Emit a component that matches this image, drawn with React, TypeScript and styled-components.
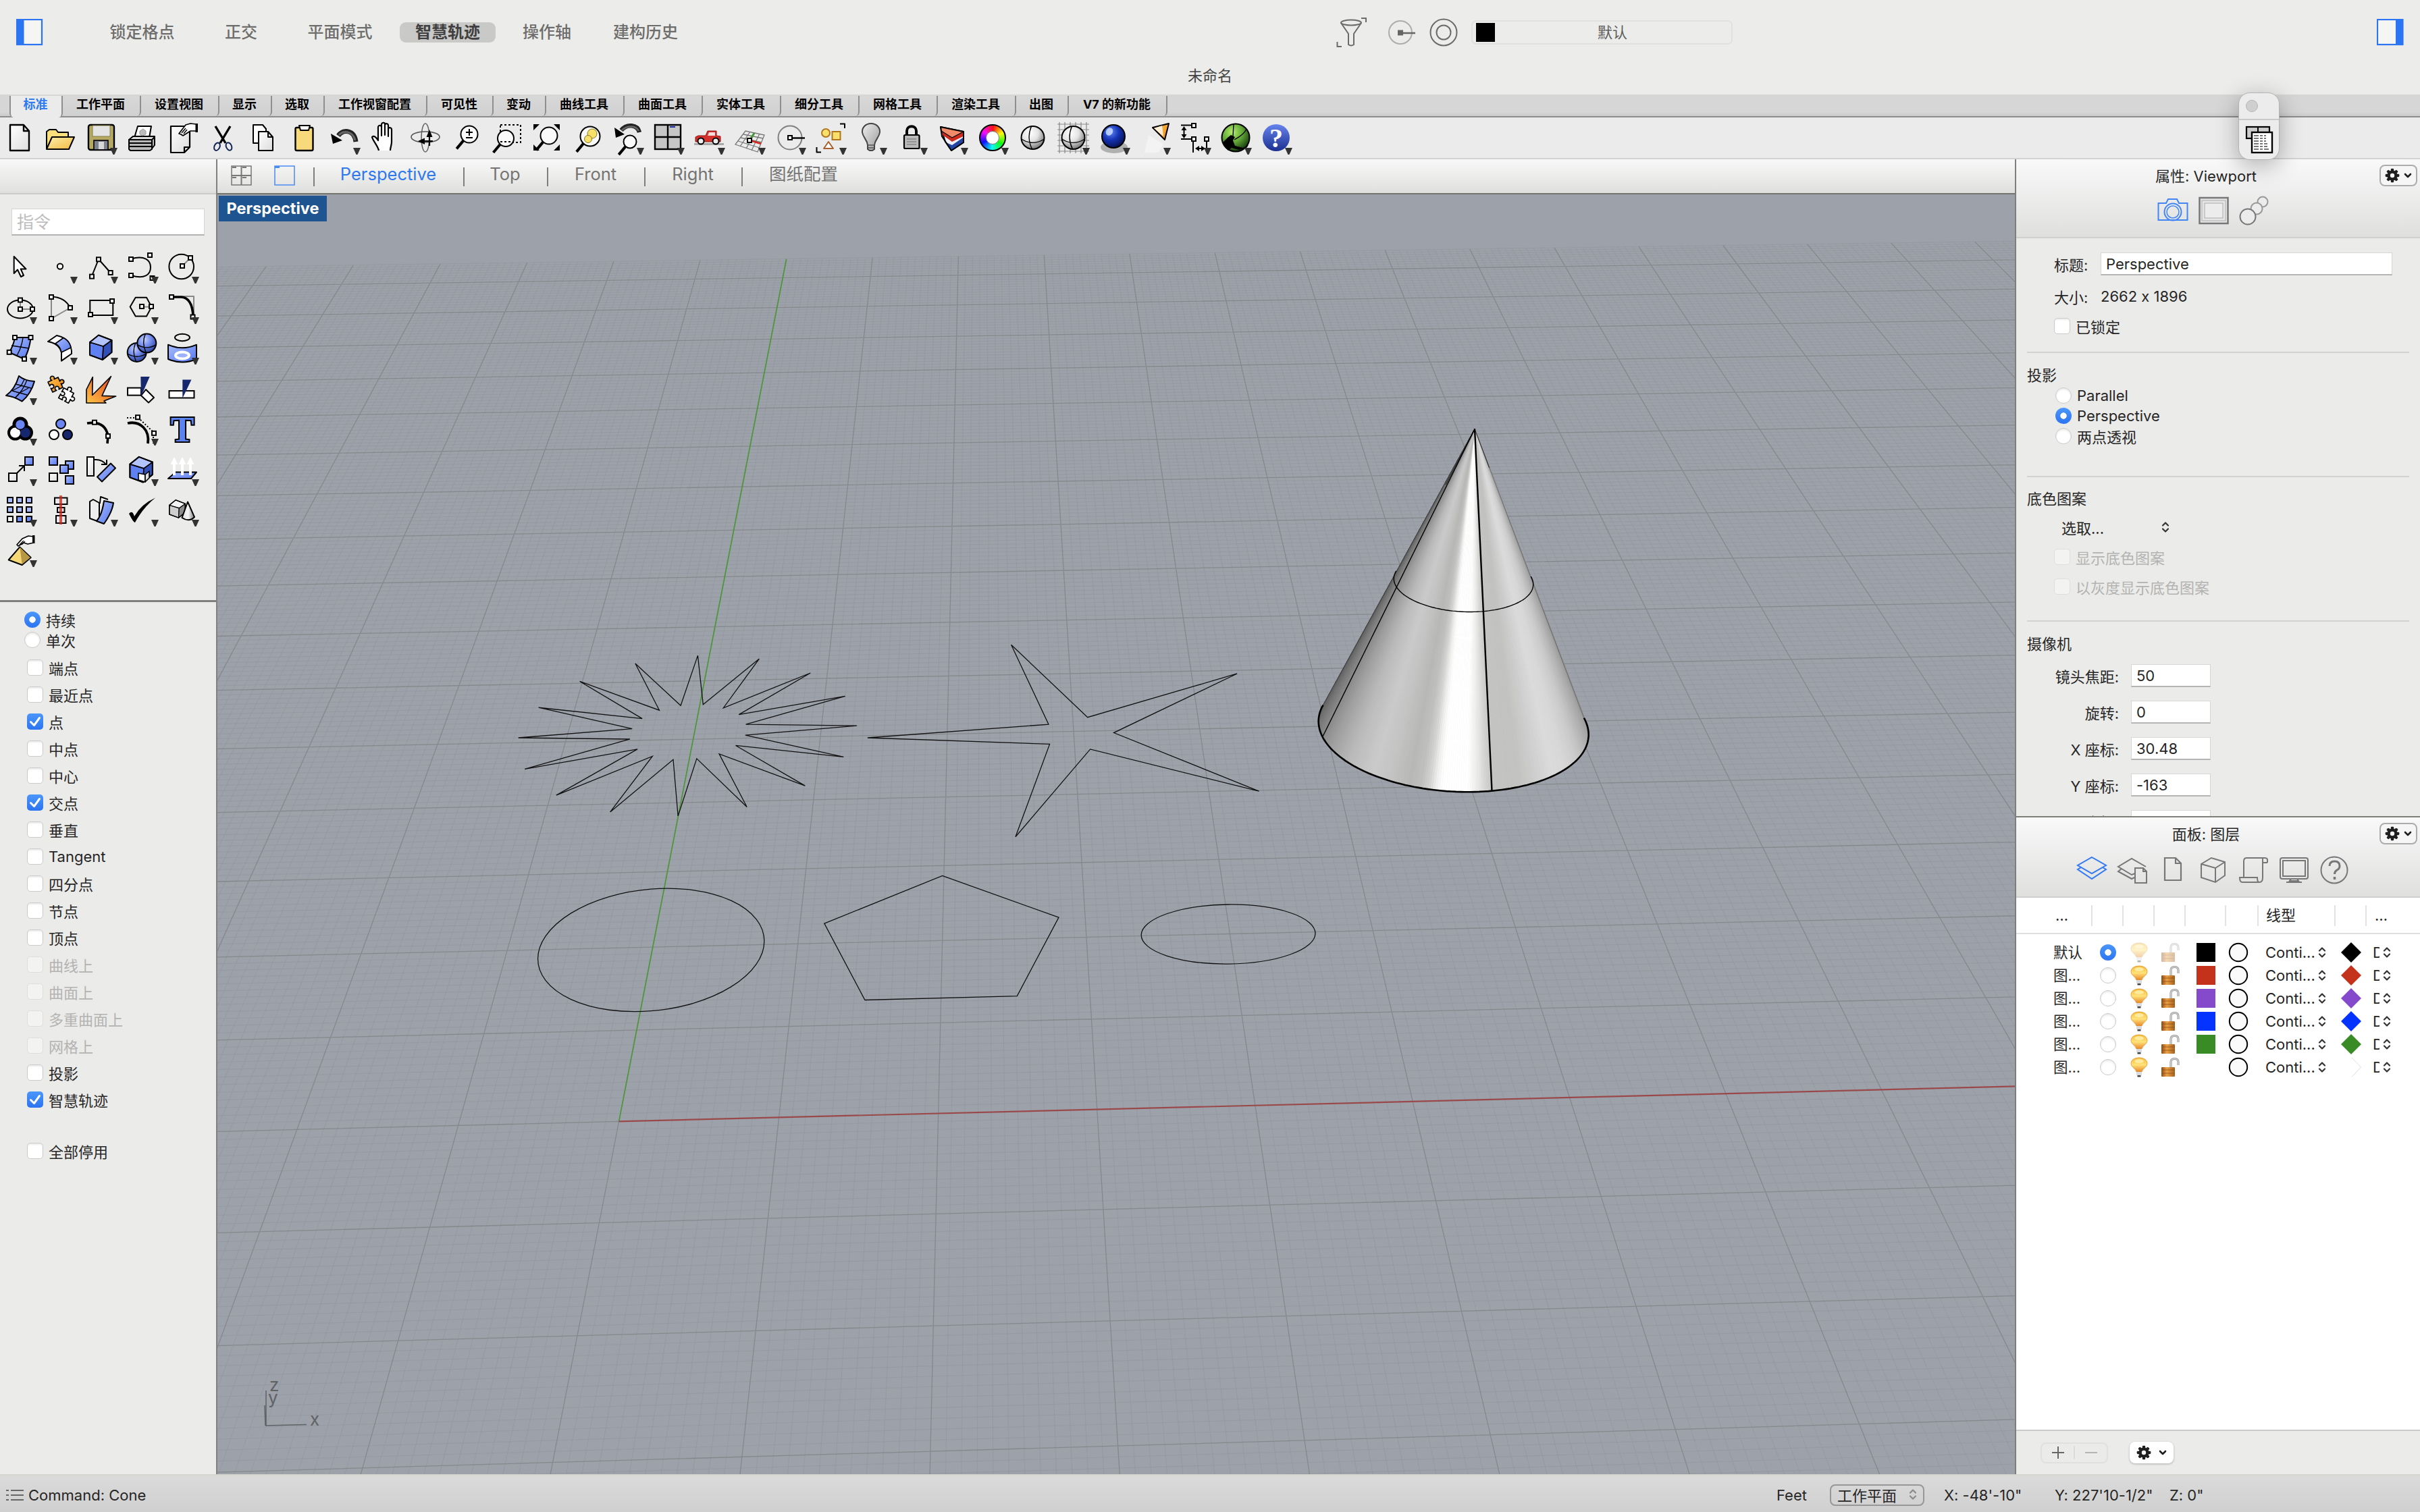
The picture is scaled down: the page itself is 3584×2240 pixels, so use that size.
import React from 'react';
import styled, { createGlobalStyle, css } from 'styled-components';

const Global = createGlobalStyle`
  html, body { margin: 0; padding: 0; }
  * { box-sizing: border-box; }
  body { background: #ebebe9; font-family: Inter, "Noto Sans CJK SC", sans-serif; font-size: 22px; color: #262626; font-feature-settings: "calt" 0; }
  svg { display: block; flex: none; }
`;

const BLUE = '#2b74f3';

/* ---------- frame ---------- */

const Window = styled.div`
  position: relative;
  width: 3584px;
  height: 2240px;
  display: flex;
  flex-direction: column;
  overflow: hidden;
  white-space: nowrap;
  background: #ebebe9;
`;

const Header = styled.header`
  height: 142px;
  flex: none;
  display: flex;
  flex-direction: column;
  background: #ececea;
  border-bottom: 2px solid #d6d6d5;
`;

const HeaderRow = styled.div`
  height: 96px;
  display: flex;
  align-items: center;
  padding: 0 24px;
`;

const Modes = styled.div`
  display: flex;
  align-items: center;
  margin-left: 78px;
`;

const Mode = styled.div<{ $w: number; $on?: boolean }>`
  width: ${p => p.$w}px;
  height: 30px;
  line-height: 29px;
  text-align: center;
  font-size: 24px;
  font-weight: ${p => (p.$on ? 700 : 500)};
  color: ${p => (p.$on ? '#404040' : '#6d6d6c')};
  border-radius: 9px;
  background: ${p => (p.$on ? '#c9c9c8' : 'transparent')};
`;

const Spacer = styled.div<{ $w?: number; $h?: number }>`
  ${p => (p.$w ? css`width: ${p.$w}px; flex: none;` : p.$h ? css`height: ${p.$h}px; flex: none;` : css`flex: 1;`)}
`;

const LayerField = styled.div`
  width: 387px;
  height: 36px;
  margin-left: 20px;
  border: 2px solid #e1e1e0;
  border-radius: 7px;
  display: flex;
  align-items: center;
  padding-left: 5px;
  color: #5e5e5e;
  font-size: 22px;
`;

const LayerSwatch = styled.i`
  width: 28px;
  height: 28px;
  background: #000;
`;

const LayerName = styled.span`
  width: 348px;
  padding-bottom: 4px;
  text-align: center;
`;

const DocTitle = styled.div`
  text-align: center;
  line-height: 32px;
  font-size: 22px;
  color: #434343;
`;

const TabStrip = styled.nav`
  height: 32px;
  flex: none;
  display: flex;
  padding-left: 14px;
  background: linear-gradient(#d6d6d6 0 24px, #cbcbcb);
  border-bottom: 2px solid #8d8d8d;
`;

const TabItem = styled.div<{ $w: number; $on?: boolean }>`
  width: ${p => p.$w}px;
  height: ${p => (p.$on ? 32 : 30)}px;
  line-height: 26px;
  text-align: center;
  font-size: 18px;
  font-weight: 700;
  color: ${p => (p.$on ? '#2f7bf0' : '#000')};
  background: ${p => (p.$on ? '#ebebeb' : 'linear-gradient(#d8d8d8, #d0d0d0)')};
  border-right: 2px solid #8f8f8f;
  border-left: ${p => (p.$on ? '2px solid #8f8f8f' : '0')};
  border-radius: 0 0 6px 6px;
  padding-right: 2px;
`;

const ToolBar = styled.div`
  height: 62px;
  flex: none;
  display: flex;
  background: #ebebeb;
  border-bottom: 2px solid #d2d2d2;
`;

const ToolRun = styled.div`
  display: flex;
  margin-left: -1px;
`;

const Main = styled.div`
  height: 1948px;
  flex: none;
  display: flex;
`;

const StatusBar = styled.footer`
  height: 56px;
  flex: none;
  display: flex;
  align-items: center;
  padding: 3px 0 0 9px;
  border-top: 2px solid #d4d4d0;
  background: linear-gradient(#dadada, #d0d0d0);
`;

const StatusText = styled.span<{ $w?: number }>`
  width: ${p => (p.$w ? p.$w + 'px' : 'auto')};
  font-size: 22px;
  flex: none;
`;

const PlaneSelect = styled.div`
  width: 140px;
  height: 32px;
  border: 2px solid #979797;
  border-radius: 8px;
  display: flex;
  align-items: center;
  justify-content: space-between;
  padding: 0 9px 2px 9px;
`;

/* ---------- left column ---------- */

const Left = styled.aside`
  width: 322px;
  flex: none;
  border-right: 2px solid #808080;
  display: flex;
  flex-direction: column;
  background: #ebebe9;
`;

const LeftCap = styled.div`
  height: 52px;
  background: linear-gradient(#f8f8f8, #e0e0df);
  border-bottom: 2px solid #cacac9;
`;

const CommandInput = styled.div`
  margin: 21px 17px 16px 17px;
  height: 40px;
  line-height: 38px;
  padding-left: 7px;
  background: #fff;
  border: 1px solid #d5d5d4;
  border-bottom: 2px solid #b2b2b2;
  font-size: 25px;
  color: #bdbdbd;
`;

const Palette = styled.div`
  display: grid;
  grid-template-columns: repeat(5, 60px);
  grid-auto-rows: 60px;
  height: 527px;
  border-bottom: 3px solid #7f7f7f;
  align-content: start;
`;

const Snaps = styled.div`
  display: flex;
  flex-direction: column;
  padding-top: 11px;
`;

const Option = styled.label<{ $h: number; $pl: number; $dim?: boolean; $gap?: number }>`
  height: ${p => p.$h}px;
  flex: none;
  padding-left: ${p => p.$pl}px;
  display: flex;
  align-items: center;
  gap: ${p => p.$gap ?? 8}px;
  font-size: 22px;
  color: ${p => (p.$dim ? '#b3b3b2' : '#262626')};
`;

const CheckBox = styled.i<{ $on?: boolean; $dim?: boolean }>`
  width: 24px;
  height: 24px;
  flex: none;
  border-radius: 5px;
  background: ${p => (p.$on ? 'linear-gradient(#4b96fb, #2c74f2)' : p.$dim ? '#f3f3f2' : '#fff')};
  border: ${p => (p.$on ? '0' : p.$dim ? '1px solid #dededd' : '1px solid #cbcbca')};
  box-shadow: ${p => (p.$on || p.$dim ? 'none' : 'inset 0 2px 2px #ececec')};
`;

const RadioDot = styled.i<{ $on?: boolean }>`
  width: 24px;
  height: 24px;
  flex: none;
  border-radius: 50%;
  background: ${p => (p.$on ? 'radial-gradient(circle, #fff 0 4.4px, transparent 5px), linear-gradient(#4b96fb, #2c74f2)' : '#fff')};
  border: ${p => (p.$on ? '0' : '1px solid #c9c9c9')};
  box-shadow: ${p => (p.$on ? 'none' : 'inset 0 2px 3px #e9e9e9')};
`;

/* ---------- centre ---------- */

const Center = styled.main`
  width: 2662px;
  flex: none;
  display: flex;
  flex-direction: column;
`;

const ViewTabs = styled.div`
  height: 52px;
  flex: none;
  display: flex;
  align-items: center;
  padding: 0 0 2px 20px;
  background: linear-gradient(#f9f9f9, #dfdfdd);
  border-bottom: 2px solid #757570;
`;

const ViewTab = styled.div<{ $w: number; $on?: boolean }>`
  width: ${p => p.$w}px;
  line-height: 28px;
  padding: 0 2px 4px 0;
  text-align: center;
  font-size: 25.5px;
  color: ${p => (p.$on ? '#2f78ee' : '#747474')};
`;

const Bar = styled.i`
  width: 2px;
  height: 28px;
  margin-top: 4px;
  background: #7f7f7f;
`;

const Canvas = styled.div`
  position: relative;
  height: 1896px;
  background: #9da1a9;
`;

const ViewLabel = styled.div`
  position: absolute;
  left: 2px;
  top: 2px;
  width: 160px;
  height: 38px;
  line-height: 38px;
  text-align: center;
  background: #1e548f;
  color: #fff;
  font-size: 23.5px;
  font-weight: 700;
`;

/* ---------- right column ---------- */

const Right = styled.aside`
  width: 600px;
  flex: none;
  border-left: 2px solid #7e7e7b;
  display: flex;
  flex-direction: column;
  background: #ebebe9;
`;

const PanelHead = styled.div<{ $h: number }>`
  height: ${p => p.$h}px;
  flex: none;
  background: linear-gradient(#f9f9f9, #dfdfde);
  border-bottom: 2px solid #cfcfce;
  display: flex;
  flex-direction: column;
`;

const HeadTitle = styled.div`
  height: 48px;
  display: grid;
  grid-template-columns: 24px 1fr 56px;
  align-items: center;
  padding-right: 4px;
  text-align: center;
`;

const HeadText = styled.span`
  padding-bottom: 2px;
`;

const GearButton = styled.div<{ $solid?: boolean }>`
  width: ${p => (p.$solid ? 65 : 56)}px;
  height: 32px;
  border-radius: 8px;
  border: ${p => (p.$solid ? '0' : '2px solid #acacab')};
  background: ${p => (p.$solid ? '#fff' : '#f6f6f6')};
  box-shadow: ${p => (p.$solid ? '0 1px 3px #aaa' : 'none')};
  display: flex;
  align-items: center;
  justify-content: center;
  gap: ${p => (p.$solid ? 11 : 6)}px;
`;

const IconRow = styled.div<{ $pl: number; $gap: number }>`
  display: flex;
  align-items: center;
  gap: ${p => p.$gap}px;
  padding-left: ${p => p.$pl}px;
`;

const PropBody = styled.div`
  height: 858px;
  flex: none;
  overflow: hidden;
  border-bottom: 2px solid #7e7e7b;
  display: flex;
  flex-direction: column;
`;

const PropRow = styled.div<{ $h: number; $pl?: number }>`
  height: ${p => p.$h}px;
  flex: none;
  display: flex;
  align-items: center;
  padding-left: ${p => p.$pl ?? 56}px;
`;

const RowLabel = styled.span<{ $w: number; $right?: boolean }>`
  width: ${p => p.$w}px;
  text-align: ${p => (p.$right ? 'right' : 'left')};
`;

const Field = styled.div<{ $w: number }>`
  width: ${p => p.$w}px;
  height: 34px;
  line-height: 32px;
  padding-left: 7px;
  background: #fff;
  border: 1px solid #d6d6d5;
  border-bottom: 2px solid #b5b5b5;
`;

const Rule = styled.hr`
  width: 566px;
  height: 2px;
  flex: none;
  margin: 0 16px;
  border: 0;
  background: #d2d2d1;
`;

const LayerTable = styled.div`
  height: 790px;
  flex: none;
  background: #fff;
  border-bottom: 2px solid #cbcbca;
`;

const COLS = '113px 46px 46px 46px 60px 48px 114px 46px 79px';

const TableHead = styled.div`
  height: 54px;
  display: grid;
  grid-template-columns: ${COLS};
  align-items: center;
  border-bottom: 2px solid #e0e0e0;
  margin-bottom: 10px;
`;

const HeadCell = styled.div<{ $pl?: number; $last?: boolean }>`
  height: 31px;
  line-height: 31px;
  padding-left: ${p => p.$pl ?? 0}px;
  border-right: ${p => (p.$last ? '0' : '2px solid #e3e3e3')};
`;

const LayerRow = styled.div`
  height: 34px;
  display: grid;
  grid-template-columns: ${COLS};
  align-items: center;
`;

const NameCell = styled.div`
  padding: 0 0 3px 55px;
  font-size: 21.5px;
`;

const MidCell = styled.div<{ $pr?: number }>`
  display: flex;
  align-items: center;
  justify-content: center;
  padding-right: ${p => p.$pr ?? 0}px;
`;

const LineCell = styled.div`
  display: flex;
  align-items: center;
  justify-content: space-between;
  padding: 0 14px 0 10px;
`;

const PrintCell = styled.div`
  display: flex;
  align-items: center;
  gap: 5px;
  padding-left: 9px;
`;

const Clip = styled.span`
  width: 10px;
  overflow: hidden;
`;

const Swatch = styled.i<{ $c: string }>`
  width: 28px;
  height: 28px;
  background: ${p => p.$c};
`;

const TableFoot = styled.div`
  flex: 1;
  display: flex;
  align-items: center;
  padding: 0 0 0 36px;
  gap: 32px;
`;

const Segment = styled.div`
  width: 100px;
  height: 31px;
  border: 2px solid #e0e0df;
  border-radius: 8px;
  display: flex;
  align-items: center;
  justify-content: space-evenly;
`;

const SegmentBar = styled.i`
  width: 2px;
  height: 20px;
  background: #dcdcdb;
`;

/* ---------- floating palette ---------- */

const Floating = styled.div`
  position: absolute;
  left: 3315px;
  top: 137px;
  width: 61px;
  height: 100px;
  border-radius: 17px;
  border: 1px solid #b3b3b3;
  background: #ececec;
  box-shadow: 0 8px 34px rgba(0, 0, 0, 0.3);
  display: flex;
  flex-direction: column;
`;

const FloatHead = styled.div`
  height: 40px;
  border-bottom: 2px solid #c9c9c9;
  padding: 10px 0 0 10px;
`;

const FloatDot = styled.i`
  display: block;
  width: 18px;
  height: 18px;
  border-radius: 50%;
  background: #cfcfcf;
  border: 1px solid #b6b6b6;
`;

const FloatBody = styled.div`
  padding: 8px 0 0 9px;
`;

/* ---------- small glyphs ---------- */

const Tick = () => (
  <svg width="24" height="24" viewBox="0 0 24 24">
    <path d="M5.5 12.5 10.5 17.5 18.5 6.5" fill="none" stroke="#fff" strokeWidth="3" strokeLinecap="round" strokeLinejoin="round" />
  </svg>
);

const Updown = ({ c = '#333' }: { c?: string }) => (
  <svg width="12" height="18" viewBox="0 0 12 18">
    <path d="M2 6.5 6 2.5 10 6.5M2 11.5 6 15.5 10 11.5" fill="none" stroke={c} strokeWidth="2.2" strokeLinecap="round" strokeLinejoin="round" />
  </svg>
);

const Gear = () => (
  <svg width="22" height="22" viewBox="-11 -11 22 22">
    {[0, 45, 90, 135].map(a => (
      <rect key={a} x="-2.2" y="-10.3" width="4.4" height="20.6" rx="1.4" fill="#1f1f1f" transform={`rotate(${a})`} />
    ))}
    <circle r="5.6" fill="none" stroke="#1f1f1f" strokeWidth="4" />
    <circle r="3.2" fill="#f8f8f8" />
  </svg>
);

const Down = () => (
  <svg width="12" height="10" viewBox="0 0 12 10">
    <path d="M2 3 6 7 10 3" fill="none" stroke="#1f1f1f" strokeWidth="2.6" strokeLinecap="round" strokeLinejoin="round" />
  </svg>
);

const SidebarGlyph = ({ right }: { right?: boolean }) => (
  <svg width="40" height="40" viewBox="0 0 40 40">
    <rect x="1" y="1" width="37" height="37" fill="#f5f5f4" stroke={BLUE} strokeWidth="2.2" />
    <rect x={right ? 28 : 0} y="0" width="11.5" height="39" fill={BLUE} />
  </svg>
);

const Line = ({ d, w = 2, c = '#000', f = 'none', dash }: { d: string; w?: number; c?: string; f?: string; dash?: string }) => (
  <path d={d} fill={f} stroke={c} strokeWidth={w} strokeLinejoin="round" strokeDasharray={dash} />
);

const H = ({ x, y }: { x: number; y: number }) => (
  <rect x={x - 3} y={y - 3} width="6" height="6" fill="#fff" stroke="#000" strokeWidth="2" />
);

const Lens = ({ x, y, r }: { x: number; y: number; r: number }) => (
  <g>
    <path d={`M${x - r * 0.7} ${y + r * 0.75} L${x - r * 0.7 - 10} ${y + r * 0.75 + 12}`} stroke="#000" strokeWidth="4" />
    <circle cx={x} cy={y} r={r} fill="#fafafa" stroke="#000" strokeWidth="2" />
  </g>
);

const Ball = ({ x, y, r, f, w = 2 }: { x: number; y: number; r: number; f: string; w?: number }) => (
  <g>
    <circle cx={x} cy={y} r={r} fill={f} stroke="#000" strokeWidth={w} />
    <path d={`M${x - r} ${y + 2} Q${x} ${y + r * 0.75} ${x + r} ${y + 2} M${x - 2} ${y - r} Q${x - r * 0.55} ${y} ${x - 1} ${y + r}`} fill="none" stroke="#000" strokeWidth={w * 0.7} />
  </g>
);

const Sq = ({ x, y, s = 12, f = 'url(#gBlue)' }: { x: number; y: number; s?: number; f?: string }) => (
  <rect x={x} y={y} width={s} height={s} fill={f} stroke="#000" strokeWidth="2" />
);

const Tool = ({ more, children }: { more?: boolean; children: React.ReactNode }) => (
  <svg width="60" height="60" viewBox="0 0 60 60">
    {children}
    {more && <path d="M44 45h11l-4.5 10h-2z" fill="#333" />}
  </svg>
);

const hue = Array.from({ length: 48 }, (_, i) => i * 7.5);

const Pincer = ({ x = 0, y = 0 }: { x?: number; y?: number }) => (
  <g transform={`translate(${x} ${y})`}>
    <path d="M1 13 9 4 18 0 26 1V10L17 12 11 10 3 15Z" fill="#fff" stroke="#000" strokeWidth="1.7" strokeLinejoin="round" />
    <path d="M5 13 11 7M8 13 13 8" stroke="#000" strokeWidth="1.2" />
    <rect x="24" y="-1" width="3.5" height="12" fill="#000" />
  </g>
);

/* ---------- toolbar icons ---------- */

const toolbarIcons: [React.ReactNode, boolean?][] = [
  [<Line d="M16 11H36L44 20V49H16ZM36 11V20H44" f="url(#gPaper)" w={2.4} />],
  [<g>
    <Line d="M10 46V21L14 18H24L27 22H42V28" f="#fbdf7c" />
    <Line d="M10 47 18 29H51L43 47Z" f="url(#gGold)" />
  </g>],
  [<g>
    <rect x="12" y="11" width="38" height="37" rx="3" fill="#b5a863" stroke="#000" strokeWidth="2.4" />
    <rect x="18" y="12" width="26" height="16" fill="#e4e4e4" stroke="#8b8047" />
    <rect x="20" y="34" width="21" height="14" fill="#7d8290" stroke="#000" strokeWidth="1.6" />
    <rect x="27" y="36" width="8" height="11" fill="#d8d8d8" />
  </g>, true],
  [<g>
    <Line d="M20 30 25 13H45L42 30" f="#fff" />
    <Line d="M12 33 18 28H50L47 33Z" f="#ddd" />
    <Line d="M12 33H46V47L43 49H14L12 47ZM46 33 50 29V41L46 46" f="#b9b9b9" />
    <Line d="M12 38H46M12 43H46" />
    <Line d="M28 20 33 17 37 20V25L32 27 28 25Z" f="#bbb" c="#999" w={1} />
  </g>],
  [<g>
    <Line d="M14 13H42V44L34 52H14ZM34 52V44H42" f="url(#gPaper)" w={2.2} />
    <Line d="M26 24 36 11 43 9 52 10V20L43 20 32 27 29 25Z" f="#fff" w={1.7} />
    <Line d="M30 23 36 16M33 24 38 18" w={1.4} />
    <rect x="50.500" y="9" width="3.500" height="13" />
  </g>],
  [<g>
    <Line d="M20 13 35 38M42 13 27 38" w={3.4} />
    <ellipse cx="22.5" cy="43" rx="4" ry="6" fill="none" stroke="#142457" strokeWidth="2" transform="rotate(25 22 43)" />
    <ellipse cx="40" cy="43" rx="4" ry="6" fill="none" stroke="#142457" strokeWidth="2" transform="rotate(-25 40 43)" />
  </g>],
  [<g>
    <Line d="M16 11H30L35 17V38H16Z" f="#fff" />
    <Line d="M24 21H38L45 29V49H24ZM38 21V29H45" f="url(#gPaper)" />
  </g>],
  [<g>
    <rect x="18.5" y="15" width="26" height="34" rx="2" fill="#f8d97b" stroke="#000" strokeWidth="2.4" />
    <Line d="M24 12H40L38 19H26Z" f="#fff" />
  </g>],
  [<g>
    <Line d="M48 36C46 19 30 16 22 27" w={7} c="#222" />
    <Line d="M47 34C44 21 31 18 23 26" w={3} c="#666" />
    <path d="M11 24 14 39 28 34Z" />
  </g>, true],
  [<Line d="M22 49C21 43 13 34 12 29 14 26 18 29 21 34V14C22 11 25 11 26 14V27 10C27 7 31 7 31 10V26 11C32 8 36 9 36 12V28 17C37 14 41 15 41 18V36C41 42 39 44 39 49" f="#fff" w={2.2} />],
  [<g>
    <ellipse cx="31" cy="30" rx="6" ry="21" fill="none" stroke="#666" strokeWidth="1.6" />
    <ellipse cx="31" cy="29" rx="21" ry="8" fill="none" stroke="#555" strokeWidth="1.6" />
    <path d="M37 18 41.5 29H32.5ZM20 35 30 30.500V40Z" />
    <Line d="M37 28V42M28 35H42" w={2.2} />
  </g>],
  [<g>
    <Lens x={36} y={25} r={12.5} />
    <Line d="M36 17V27M31 22H41M31 30H41" />
  </g>],
  [<g>
    <rect x="22" y="11" width="30" height="26" fill="none" stroke="#000" strokeWidth="2" strokeDasharray="3 3" />
    <Lens x={30} y={31} r={12} />
    <Line d="M22 36H38" dash="3 3" />
  </g>],
  [<g>
    <path d="M11 10H20L11 19ZM50 10H41L50 19ZM11 49H20L11 40ZM50 49H41L50 40Z" />
    <Lens x={34} y={27} r={12.5} />
  </g>],
  [<g>
    <Lens x={35} y={28} r={14.5} />
    <circle cx="38" cy="24" r="7" fill="#f6e06a" stroke="#8a7820" />
    <circle cx="32" cy="32" r="5.5" fill="#f6e06a" stroke="#8a7820" />
  </g>],
  [<g>
    <Line d="M48 22C45 10 29 9 21 19" w={6.5} c="#222" />
    <Line d="M47 20C43 12 30 11 22 19" w={2.6} c="#666" />
    <path d="M11 15 13 30 26 25Z" />
    <Lens x={34} y={36} r={9.5} />
  </g>, true],
  [<g>
    <rect x="11" y="11" width="38" height="36" fill="#c6c6c6" stroke="#000" strokeWidth="2.4" />
    <Line d="M30 11V47M11 29H49" w={2.4} />
    <path d="M33 13h8v2h-8z" fill="#1c2f9c" />
  </g>, true],
  [<g>
    <path d="M9 39.5h44" stroke="#aaa" strokeWidth="3" />
    <path d="M11 36V29L15 27H26L29 20H42V27L48 28V36Z" fill="#d5302b" stroke="#8e1512" />
    <path d="M31 22h9v5H29z" fill="#f7dcdc" />
    <circle cx="19" cy="35" r="4.5" stroke="#000" strokeWidth="2" fill="#eee" />
    <circle cx="41" cy="35" r="4.5" stroke="#000" strokeWidth="2" fill="#eee" />
  </g>, true],
  [<g>
    <path d="M10 40 25 20 53 26 43 51Z M14 35 46 45M18 30 49 37M22 25 51 31M17 43 32 21M26 46 39 23M34 49 46 24" fill="none" stroke="#777" strokeWidth="1.3" />
    <Line d="M31 34 38 23" c="#3ba02e" w={2.6} />
    <Line d="M32 34 48 39" c="#d02a22" w={2.6} />
    <H x={31} y={34} />
  </g>, true],
  [<g>
    <circle cx="31" cy="30" r="17.5" fill="none" stroke="#808080" strokeWidth="2" />
    <Line d="M34 30.500H53" w={2.4} />
    <H x={31} y={30} />
  </g>, true],
  [<g>
    <circle cx="24" cy="23" r="6" fill="#f8e06b" stroke="#b0761d" strokeWidth="2" />
    <rect x="33.5" y="21" width="12" height="12" fill="#f8e06b" stroke="#b0761d" strokeWidth="2" />
    <Line d="M28 36 35 46H21Z" c="#a8602c" f="#fff" />
    <Line d="M45 9.500H52V16M10.500 44V51.500H17" />
  </g>, true],
  [<g>
    <path d="M31 9C22 9 17.5 16 18 22 19 30 25 32 26 41V47L29 49H33L36 47V41C37 32 43 30 44 22 44.5 16 40 9 31 9Z" fill="url(#gGrey)" stroke="#444" strokeWidth="2" />
    <Line d="M26 41H36M26 45H36" c="#555" w={1.5} />
  </g>, true],
  [<g>
    <path d="M24 27V20C24 11 38 11 38 20V27" fill="none" stroke="#000" strokeWidth="4" />
    <rect x="20" y="26" width="22.5" height="20" rx="1.5" fill="#b9b9b9" stroke="#000" strokeWidth="2.2" />
    <Line d="M24 32H38M24 36H38M24 40H38" c="#888" w={1.5} />
  </g>, true],
  [<g>
    <Line d="M14 14 21 36 30 49 48 37V21Z" f="#eef1fa" />
    <path d="M22 37 30 49 47 37V30L31 41Z" fill="#2244a5" />
    <path d="M14.500 16 17 26 31 36 47.500 28V21L30 30Z" fill="#cc2a1d" />
    <Line d="M14 14 48 21 31 30 15 20Z" f="#f08a68" w={1.2} />
    <Line d="M14 14 16 28 30 49 48 37V21Z" />
  </g>, true],
  [<g>
    {hue.map(a => (
      <path key={a} d="M0 -14 A14 14 0 0 1 2.5 -13.8" transform={`translate(31 30) rotate(${a})`} fill="none" stroke={`hsl(${a} 95% 52%)`} strokeWidth="9" />
    ))}
    <circle cx="31" cy="30" r="19" fill="none" stroke="#000" strokeWidth="2" />
    <circle cx="31" cy="30" r="9.5" fill="#fff" stroke="#777" />
  </g>, true],
  [<Ball x={30.5} y={30} r={17} f="url(#gGreyBall)" />],
  [<g>
    <path d="M7 10H54M7 18H54M7 26H54M7 34H54M7 42H54M7 50H54M10 7V53M18 7V53M26 7V53M34 7V53M42 7V53M50 7V53" stroke="#888" strokeWidth="1.2" />
    <Ball x={30.5} y={30} r={17} f="url(#gGreyBall)" />
  </g>, true],
  [<g>
    <ellipse cx="31" cy="44" rx="20" ry="9" fill="#000" opacity=".25" />
    <circle cx="30" cy="28" r="17" fill="url(#gDeep)" stroke="#000" strokeWidth="2" />
    <ellipse cx="24" cy="21" rx="5" ry="6" fill="#cfe2ff" opacity=".8" transform="rotate(30 24 21)" />
  </g>, true],
  [<g>
    <path d="M22 26 44 40 36 52H16Z" fill="#fff" opacity=".4" />
    <Line d="M28 15 52 9 46 33Z" f="url(#gOrange)" />
    <path d="M30 16 42 12 44 28Z" fill="#fff" opacity=".8" />
  </g>, true],
  [<g>
    <Line d="M10 11.500H28M10 32H28M14.500 16V28M28 34V52M48 34V52M33 46H45" />
    <path d="M14.5 13l4 6h-8zM14.5 31l4-6h-8zM31 46l6-4v8zM46 46l-6-4v8z" />
    <H x={29} y={12} /><H x={29} y={32} /><H x={48} y={32} />
  </g>, true],
  [<g>
    <circle cx="31" cy="30" r="20.5" fill="url(#gGreen)" stroke="#000" strokeWidth="2" />
    <path d="M12 37 19 30 24 26 30 29 27 34 30 42 42 45 50 41 47 45 36 48 25 45 20 49Q13 43 12 37Z" />
    <Line d="M27 28 28 10M29 33Q44 25 47 17" w={1.4} />
  </g>, true],
  [<g>
    <circle cx="31" cy="30" r="20" fill="url(#gHelp)" />
    <text x="31" y="44" textAnchor="middle" fontFamily="Liberation Serif, serif" fontWeight="700" fontSize="40" fill="#fff">?</text>
  </g>, true],
];

/* ---------- palette icons ---------- */

const Cube = ({ t = '#b3c3fb', l = '#5f80f0', r = '#3350b8', g = '' }) => (
  <g transform={g}>
    <Line d="M13 22 33 28 32 48 13 41Z" f={l} w={1.6} />
    <Line d="M33 28 45.500 19V37L32 48Z" f={r} w={1.6} />
    <Line d="M13 22 26 11.500 45.500 19 33 28Z" f={t} w={1.6} />
    <Line d="M13 22 26 11.500 45.500 19V37L32 48 13 41Z" />
  </g>
);

const Puzzle = ({ f, x, y, a }: { f: string; x: number; y: number; a: number }) => (
  <path
    transform={`translate(${x} ${y}) rotate(${a}) scale(.92) translate(-10 -10)`}
    d="M1 1H8A3.300 3.300 0 1 1 12 1H19V8A3.300 3.300 0 1 1 19 12V19H12A3.300 3.300 0 1 0 8 19H1V12A3.300 3.300 0 1 0 1 8Z"
    fill={f}
    stroke="#000"
    strokeWidth="1.900"
    strokeLinejoin="round"
  />
);

const paletteIcons: [React.ReactNode, boolean?][] = [
  [<Line d="M20.700 15V40L26 34.500 31 45 35 43 30.700 33.500H38.500Z" f="#fff" />],
  [<circle cx="29" cy="29.600" r="4.200" fill="#fff" stroke="#000" strokeWidth="2" />, true],
  [<g><Line d="M16 44 26 19 43.700 39" /><H x={16} y={44.6} /><H x={26} y={19.3} /><H x={43.7} y={39} /></g>, true],
  [<g><Line d="M14 18.500C34 13 43 20 43 31S34 49 14 43" /><H x={14} y={19} /><H x={14} y={43} /><H x={42} y={13} /><H x={45.5} y={47} /></g>, true],
  [<g><circle cx="28.7" cy="30" r="18.3" fill="none" stroke="#000" strokeWidth="2" /><Line d="M30 29 42 17" c="#888" /><H x={42} y={17} /><H x={30} y={29} /></g>, true],

  [<g><ellipse cx="30" cy="33" rx="19" ry="13.5" fill="none" stroke="#000" strokeWidth="2" /><Line d="M30 19V33H48" c="#888" /><H x={30} y={19.5} /><H x={30} y={33} /><H x={48} y={33} /></g>, true],
  [<g><Line d="M16 15V47L44 31" c="#888" /><Line d="M16 14.500Q36 15 44 31" /><H x={16} y={15} /><H x={44} y={31} /><H x={16} y={47} /></g>, true],
  [<g><rect x="13.3" y="20" width="34" height="22" fill="none" stroke="#000" strokeWidth="2" /><H x={46} y={21} /><H x={14} y={41} /></g>, true],
  [<g><Line d="M12.700 29.600 20.700 15.700H37L44.500 29.600 37 43.500H20.700Z" /><Line d="M30 29.600H44" c="#888" /><H x={30} y={29} /><H x={44} y={29} /></g>, true],
  [<g><Line d="M28 14H47V42" c="#888" /><Line d="M14 15H28Q45 16 46 44" w={3.6} /><H x={14} y={15} /><H x={45.5} y={44.5} /></g>, true],

  [<g><Line d="M22 15H45.500Q44 32 36 47L13.700 37Q20 27 22 15Z" f="url(#gBlue)" /><Line d="M17 27 43 31M34 15Q32 30 25 42" w={1.4} /><H x={22} y={15} /><H x={45.5} y={15} /><H x={13.7} y={36.8} /><H x={36} y={46.8} /></g>, true],
  [<g><Line d="M11 21 24 12Q44 16 46 35V39L31 49.600V37Q28 24 11 21Z" f="#fff" /><Line d="M22 24 34 15.500Q43 20 45 30L31 37Q29 28 22 24Z" f="url(#gBlue)" w={1.6} /></g>, true],
  [<Cube />, true],
  [<g><Ball x={22.7} y={37} r={14} f="url(#gBlueBall)" /><Ball x={37.3} y={23.6} r={14} f="url(#gBlueBall)" /></g>, true],
  [<g><ellipse cx="30" cy="15" rx="11" ry="5.2" fill="none" stroke="#000" strokeWidth="2" /><Line d="M9 25.700Q30 35 51 25.700V47Q30 56 9 47Z" f="url(#gBlue)" /><ellipse cx="30" cy="41.5" rx="10" ry="5" fill="#9db2fa" stroke="#fff" strokeWidth="4" /></g>, true],

  [<g><Line d="M28 12Q36 19 51 20 46 38 32.700 49.600 20 42 9 41 22 32 28 12Z" f="url(#gBlue)" /><Line d="M23 24 46 30M18 34 40 40M40 18Q34 34 22 45M18 34 31 27 36 17M22 45 29 37 42 30" w={1.3} /></g>, true],
  [<g><Puzzle f="url(#gOrange)" x={22} y={25} a={-25} /><Puzzle f="#fff" x={38} y={41} a={28} /></g>],
  [<Line d="M8 32 17.300 13.600 16.700 40.500 44.500 12.500 31 41.400 51.700 42 34 49 37 52H8Z" f="url(#gBurst)" w={1.6} />],
  [<g><rect x="9" y="29.6" width="20" height="11" fill="#fff" stroke="#000" strokeWidth="2" /><Line d="M36 32 48 44 40 51.500 29 41Z" f="#fff" /><path d="M28.3 12.9H41.7L29 42Z" fill="#17276e" /></g>],
  [<g><rect x="10.5" y="34" width="37" height="10.5" fill="#fff" stroke="#000" strokeWidth="2" /><path d="M30.3 17.5H43.5L30.3 45Z" fill="#17276e" /></g>],

  [<g><g stroke="#000" strokeWidth="7"><circle cx="30" cy="24" r="8" /><circle cx="22.5" cy="36" r="8" /><circle cx="37.5" cy="36" r="8" /></g><circle cx="22.5" cy="36" r="7.5" fill="#fff" /><circle cx="37.5" cy="36" r="7.5" fill="#17276e" /><circle cx="30" cy="24" r="7.5" fill="#6b86f3" stroke="#000" strokeWidth="1.5" /></g>, true],
  [<g stroke="#000" strokeWidth="2"><circle cx="30" cy="22.9" r="7" fill="#6b86f3" /><circle cx="20" cy="39" r="7" fill="#fff" /><circle cx="40" cy="39" r="7" fill="#17276e" /></g>],
  [<g><Line d="M9 22Q36 18 40 41L39 52" w={3.6} /><H x={20} y={20.7} /><H x={40} y={41} /></g>],
  [<g><Line d="M9 22C28 18 42 32 39 52" w={3.8} /><Line d="M8 14H22M28 17 46 34M47 42V52" dash="2 2.5" /><H x={24} y={13.2} /><H x={48} y={36.8} /></g>, true],
  [<g>
    <text x="30" y="49" textAnchor="middle" fontFamily="Liberation Serif, serif" fontWeight="700" fontSize="52" fill="#5b82ee" stroke="#000" strokeWidth="4" paintOrder="stroke">T</text>
  </g>],

  [<g><Sq x={37} y={12} /><Sq x={13} y={36} f="url(#gPaper)" /><Line d="M25 36 36 25M28 25H36V33" /></g>, true],
  [<g><Sq x={13} y={12} /><Sq x={13} y={36} f="url(#gPaper)" /><Sq x={37} y={18} /><Sq x={29} y={24} /><Sq x={37} y={40} /></g>],
  [<g><rect x="9" y="12" width="10" height="28" fill="url(#gPaper)" stroke="#000" strokeWidth="2" /><Line d="M44 21.500 51 28.500 31 48.500 24 41.500Z" f="url(#gBlue)" /><Line d="M20 16Q31 15 37 23M30 23H38V16" /></g>],
  [<g><Cube g="translate(-1 0) scale(1.03)" /><Line d="M25 36 35 38V49L25 46Z" f="#fff" w={1.6} /><Line d="M35 38 41 33V43L35 49Z" f="#ddd" w={1.6} /></g>, true],
  [<g><Line d="M20 34.500H51L43 44H9Z" f="url(#gBlue)" /><path d="M16 39V23H12.5L18 12 23.5 23H20V39ZM28 39V23H24.5L30 12 35.5 23H32V39ZM40 39V23H36.5L42 12 47.5 23H44V39Z" fill="#fff" /></g>, true],

  [<g>{[16, 30, 44].map(y => [15, 29, 43].map(x => <Sq key={x + '-' + y} x={x - 4} y={y - 4} s={8} f={y === 44 ? (x === 15 ? '#f4f4f4' : '#6c8af4') : '#a9bbf8'} />))}</g>, true],
  [<g fill="#e9e9e9" stroke="#000" strokeWidth="2"><rect x="21" y="12.5" width="18.5" height="9.5" /><rect x="25" y="27" width="10.5" height="7" /><rect x="23" y="39" width="14.5" height="11" /><path d="M30 9V52" stroke="#c8241a" strokeWidth="4" opacity=".75" /></g>, true],
  [<g><Line d="M13 18 18 15 27 20V44L24 47 13 43Z" f="#eee" /><Line d="M28 21 29 11 40 15" f="#fff" /><Line d="M34 17 48 20Q46 34 34 51L23 47Q31 38 34 17Z" f="url(#gBlue)" /></g>, true],
  [<path d="M11 36Q16 30 19 40 29 22 50 12.5 32 27 20 49 18 50 11 36Z" />, true],
  [<g><Cube t="#f4f4f4" l="#cfcfcf" r="#8c8c8c" g="translate(1.500 7.500) scale(.72)" /><Line d="M38 18.500 48 41Q40 49 29.500 42Z" f="url(#gCone)" /></g>, true],

  [<g><Pincer x={24} y={9} /><Line d="M29.300 25.400 12.700 44.500 32.700 52 45.700 41Z" f="#f7d877" /><path d="M29.3 25.4 32.7 51 45 41Z" fill="#b89744" /></g>, true],
];

/* ---------- scene ---------- */

const px = (u: number, v: number) => {
  const k = 0.002 * u + 0.05143 * v + 1;
  return `${((239.3 * u + 74.79 * v + 916.6) / k).toFixed(1)} ${((-2.65 * u - 56.95 * v + 1661.4) / k).toFixed(1)}`;
};

const SIDE = 200 / 12;
const buildGrid = (major: boolean) => {
  let d = '';
  for (let i = -96; i <= 200; i++) {
    if ((i % 12 === 0) !== major) continue;
    d += `M${px(i / 12, -5)}L${px(i / 12, i === 0 ? 0 : SIDE)}`;
  }
  for (let j = -60; j <= 200; j++) {
    if ((j % 12 === 0) !== major) continue;
    d += `M${px(-8, j / 12)}L${px(j === 0 ? 0 : SIDE, j / 12)}`;
  }
  return d;
};
const minorGrid = buildGrid(false);
const majorGrid = buildGrid(true);

type Ring = [number, number, number, number, number];
const baseRing: Ring = [2152.7, 1078.5, 200, 9.9, 94.2];
const midRing: Ring = [2167.5, 861.5, 103.2, 4.3, 44.8];
const onRing = ([cx, cy, a, s, b]: Ring, deg: number) => {
  const t = (deg * Math.PI) / 180;
  return `${(cx + a * Math.cos(t)).toFixed(1)} ${(cy + s * Math.cos(t) + b * Math.sin(t)).toFixed(1)}`;
};
const arc = (ring: Ring) => 'M' + Array.from({ length: 106 }, (_, i) => onRing(ring, -15 + i * 2)).join('L');

const shades: [number, number][] = [
  [-16, 138], [-4, 152], [12, 178], [25, 204], [35, 217], [43, 220], [52, 208], [61, 195], [73, 196], [76.3, 212], [80.2, 236], [84.1, 255],
  [95, 255], [97.5, 240], [100.5, 212], [104, 192], [109.3, 184], [117.6, 195], [126.7, 203], [139.8, 188], [156, 158], [165.2, 140], [180, 112], [196, 90],
];
const shadeAt = (t: number) => {
  const i = Math.max(1, shades.findIndex(s => s[0] >= t));
  const [a, va] = shades[i - 1];
  const [b, vb] = shades[i];
  const g = Math.round(va + ((vb - va) * (t - a)) / (b - a));
  return `rgb(${g},${g},${t > 55 && t < 118 && g < 250 ? g - 2 : g})`;
};
const facets = Array.from({ length: 210 }, (_, i) => -15 + i);

const burst = '371,143 381,289 486,153 419,299 582,195 448,319 647,264 461,348 669,352 460,380 644,445 442,411 572,531 411,436 463,594 369,450 334,621 325,453 207,609 286,443 106,559 258,422 47,481 244,392 35,388 248,361 73,298 267,331 150,220 299,306 254,167 339,292';
const star = '958,111 1101,327 1381,197 1150,373 1422,547 1106,422 966,683 1030,407 689,388 1028,348';
const pentagon = '829,799 1047,923 969,1157 684,1169 608,941';

const Grad = ({ id, stops, flat }: { id: string; stops: string[]; flat?: boolean }) => (
  <linearGradient id={id} x1="0" y1="0" x2="1" y2={flat ? 0 : 1}>
    {stops.map((c, i) => <stop key={i} offset={i / (stops.length - 1)} stopColor={c} />)}
  </linearGradient>
);
const Radial = ({ id, stops }: { id: string; stops: string[] }) => (
  <radialGradient id={id} cx=".38" cy=".3" r=".72">
    {stops.map((c, i) => <stop key={i} offset={i / (stops.length - 1)} stopColor={c} />)}
  </radialGradient>
);

const Scene = () => (
  <svg width="2662" height="1896" viewBox="322 288 2662 1896">
    <defs>
      <Grad id="gBlue" stops={['#a9bcfb', '#5578ee']} />
      <Grad id="gPaper" stops={['#ffffff', '#dcdcdc']} />
      <Grad id="gGold" stops={['#fdf0ae', '#f0b93f']} />
      <Grad id="gGrey" stops={['#ededed', '#9a9a9a']} />
      <Grad id="gOrange" stops={['#fbc04a', '#ee8a1d']} />
      <Grad id="gCone" stops={['#dedede', '#f6f6f6', '#777']} flat />
      <linearGradient id="gBurst" x1="0" y1="1" x2="1" y2="0"><stop offset="0" stopColor="#fbc646" /><stop offset="1" stopColor="#e5391b" /></linearGradient>
      <linearGradient id="gHelp" x1="0" y1="0" x2="0" y2="1"><stop offset="0" stopColor="#6684ee" /><stop offset="1" stopColor="#1b2f8f" /></linearGradient>
      <linearGradient id="gBulb" x1="0" y1="0" x2="0" y2="1"><stop offset="0" stopColor="#f7b733" /><stop offset=".5" stopColor="#ffe27a" /><stop offset="1" stopColor="#e8862a" /></linearGradient>
      <linearGradient id="gLock" x1="0" y1="0" x2="1" y2="0"><stop offset="0" stopColor="#8c4b12" /><stop offset=".4" stopColor="#eda044" /><stop offset="1" stopColor="#a4611d" /></linearGradient>
      <Radial id="gBlueBall" stops={['#c3d0ff', '#7089ea', '#2b4399']} />
      <Radial id="gGreyBall" stops={['#ffffff', '#e3e3e3', '#777']} />
      <Radial id="gDeep" stops={['#5f86f5', '#1433b4', '#061150']} />
      <Radial id="gGreen" stops={['#b6ee6c', '#63a838', '#173d10']} />
    </defs>
    <path d={minorGrid} stroke="#8f949b" strokeWidth="1" fill="none" opacity=".55" />
    <path d={majorGrid} stroke="#7f8284" strokeWidth="1.3" fill="none" opacity=".8" />
    <path d={`M${px(0, 0)}L${px(0, SIDE)}`} stroke="#4e963e" strokeWidth="1.8" />
    <path d={`M${px(0, 0)}L${px(SIDE, 0)}`} stroke="#99494a" strokeWidth="2.2" />
    <g transform="translate(740 900) scale(.79083 .49744)" fill="none" stroke="#111" strokeWidth="1.3">
      <polygon points={burst} vectorEffect="non-scaling-stroke" />
      <polygon points={star} vectorEffect="non-scaling-stroke" />
      <polygon points={pentagon} vectorEffect="non-scaling-stroke" />
      <circle r="1" transform="matrix(212 -26.6 0 181.6 283.5 1020)" vectorEffect="non-scaling-stroke" />
      <circle r="1" transform="matrix(163 -2.5 0 88.5 1364.5 973)" vectorEffect="non-scaling-stroke" />
    </g>
    {facets.map(t => {
      const c = shadeAt(t + 0.5);
      return <path key={t} d={`M2184 635.6L${onRing(baseRing, t)}L${onRing(baseRing, t + 1)}Z`} fill={c} stroke={c} strokeWidth=".7" />;
    })}
    <g fill="none" stroke="#000">
      <path d={arc(baseRing)} strokeWidth="2.6" />
      <path d={arc(midRing)} strokeWidth="1.4" />
      <path d="M2184 635.6 2209.5 1171.5" strokeWidth="2.4" />
      <path d="M2184 635.6 1959.3 1090.5" strokeWidth="1.4" />
      <path d={`M${onRing(baseRing, 195)}L2184 635.6L${onRing(baseRing, -15)}`} strokeWidth="1" opacity=".3" />
      <path d="M2141 718 2184 635.6 2205.600 693" strokeWidth="1.2" opacity=".6" />
    </g>
    <path d="M394 2060V2112M392 2082 393 2112M393 2112 454 2110.5" stroke="#5f6266" strokeWidth="1.5" fill="none" />
    <g fill="#606366" fontFamily="Inter, sans-serif" fontSize="26">
      <text x="399" y="2061">z</text>
      <text x="397" y="2080">y</text>
      <text x="459" y="2111.5">x</text>
    </g>
  </svg>
);

/* ---------- data ---------- */

const tabs: [string, number][] = [
  ['标准', 79], ['工作平面', 116], ['设置视图', 116], ['显示', 78], ['选取', 78], ['工作视窗配置', 152], ['可见性', 98], ['变动', 78],
  ['曲线工具', 116], ['曲面工具', 116], ['实体工具', 116], ['细分工具', 116], ['网格工具', 116], ['渲染工具', 116], ['出图', 78], ['V7 的新功能', 146],
];

const snaps: [string, string?][] = [
  ['端点'], ['最近点'], ['点', 'on'], ['中点'], ['中心'], ['交点', 'on'], ['垂直'], ['Tangent'], ['四分点'], ['节点'], ['顶点'],
  ['曲线上', 'dim'], ['曲面上', 'dim'], ['多重曲面上', 'dim'], ['网格上', 'dim'], ['投影'], ['智慧轨迹', 'on'],
];

const layers: [string, string][] = [
  ['默认', '#000000'], ['图…', '#c5321c'], ['图…', '#8549cc'], ['图…', '#0433ff'], ['图…', '#388b25'], ['图…', '#ffffff'],
];

const camera: [string, string][] = [['镜头焦距:', '50'], ['旋转:', '0'], ['X 座标:', '30.48'], ['Y 座标:', '-163'], ['Z 座标:', '163']];

const Bulb = ({ dim }: { dim?: boolean }) => (
  <svg width="26" height="30" viewBox="0 0 26 30" opacity={dim ? 0.4 : 1}>
    <path d="M13 1C5 1 1 5 1 9.5 1 15 8 17 9 22H17C18 17 25 15 25 9.5 25 5 21 1 13 1Z" fill="url(#gBulb)" stroke="#df9427" strokeWidth=".8" />
    <ellipse cx="13" cy="6" rx="7" ry="3" fill="#fff2b0" opacity=".8" />
    <rect x="9" y="22" width="8" height="5" fill="#d8dbe0" />
    <rect x="10.5" y="27" width="5" height="2.5" fill="#444" />
  </svg>
);

const OpenLock = ({ dim }: { dim?: boolean }) => (
  <svg width="30" height="30" viewBox="0 0 30 30" opacity={dim ? 0.4 : 1}>
    <path d="M16 16V7C16 1 27 1 27 7V12" fill="none" stroke="#999" strokeWidth="3.2" />
    <path d="M16 16V7C16 1 27 1 27 7V12" fill="none" stroke="#e3e3e3" strokeWidth="1.2" />
    <rect x="2" y="15" width="20" height="14" rx="1" fill="url(#gLock)" />
    <path d="M2 19H22M2 24H22" stroke="#8b4e16" strokeWidth=".8" />
  </svg>
);

const Check = ({ s, on, dim }: { s: string; on?: boolean; dim?: boolean }) => (
  <>
    <CheckBox $on={on} $dim={dim}>{on && <Tick />}</CheckBox>
    {s}
  </>
);

export default function App() {
  return (
    <Window>
      <Global />
      <Header>
        <HeaderRow>
          <SidebarGlyph />
          <Modes>
            <Mode $w={137}>锁定格点</Mode>
            <Spacer $w={17} />
            <Mode $w={122}>正交</Mode>
            <Spacer $w={18} />
            <Mode $w={135}>平面模式</Mode>
            <Spacer $w={21} />
            <Mode $w={142} $on>智慧轨迹</Mode>
            <Spacer $w={15} />
            <Mode $w={122}>操作轴</Mode>
            <Spacer $w={22} />
            <Mode $w={126}>建构历史</Mode>
          </Modes>
          <Spacer $w={960} />
          <svg width="46" height="46" viewBox="0 0 46 46" fill="none" stroke="#6b6b6b" strokeWidth="2">
            <ellipse cx="22" cy="8.5" rx="15" ry="4" /><path d="M7 9 18 25V41Q22 44 26 41V25L37 9M37 2H44V8M1.5 37V44H8" />
          </svg>
          <Spacer $w={31} />
          <svg width="41" height="40" viewBox="0 0 41 40">
            <circle cx="18" cy="20" r="17" fill="none" stroke="#adadac" strokeWidth="2" />
            <path d="M18 21H40" stroke="#666" strokeWidth="2.5" /><rect x="14" y="16.5" width="8" height="8" fill="#666" />
          </svg>
          <Spacer $w={20} />
          <svg width="42" height="42" viewBox="0 0 42 42" fill="none" stroke="#6b6b6b" strokeWidth="2">
            <circle cx="21" cy="21" r="19.5" /><circle cx="21" cy="21" r="10.5" />
          </svg>
          <LayerField>
            <LayerSwatch />
            <LayerName>默认</LayerName>
          </LayerField>
          <Spacer />
          <SidebarGlyph right />
        </HeaderRow>
        <DocTitle>未命名</DocTitle>
      </Header>
      <TabStrip>
        {tabs.map(([s, w], i) => <TabItem key={s} $w={w} $on={i === 0}>{s}</TabItem>)}
      </TabStrip>
      <ToolBar>
        <ToolRun>
          {toolbarIcons.map(([icon, more], i) => <Tool key={i} more={more}>{icon}</Tool>)}
        </ToolRun>
      </ToolBar>
      <Main>
        <Left>
          <LeftCap />
          <CommandInput>指令</CommandInput>
          <Palette>
            {paletteIcons.map(([icon, more], i) => <Tool key={i} more={more}>{icon}</Tool>)}
          </Palette>
          <Snaps>
            <Option $h={30} $pl={36}><RadioDot $on />持续</Option>
            <Option $h={30} $pl={36}><RadioDot />单次</Option>
            <Spacer $h={6} />
            {snaps.map(([s, st]) => (
              <Option key={s} $h={40} $pl={40} $dim={st === 'dim'}>
                <Check s={s} on={st === 'on'} dim={st === 'dim'} />
              </Option>
            ))}
            <Spacer $h={36} />
            <Option $h={40} $pl={40}><Check s="全部停用" /></Option>
          </Snaps>
        </Left>
        <Center>
          <ViewTabs>
            <svg width="31" height="30" viewBox="0 0 31 30" fill="none" stroke="#777" strokeWidth="1.5">
              <rect x="1" y="1" width="29" height="28" /><path d="M15.5 1V29M1 15H30" strokeWidth="2" /><path d="M2 3h6M17 3h6M2 18h6M17 18h6" strokeWidth="2" />
            </svg>
            <Spacer $w={33} />
            <svg width="31" height="30" viewBox="0 0 31 30" fill="none" stroke="#4a8af5" strokeWidth="1.5">
              <rect x="1" y="1" width="29" height="28" /><path d="M1 2.5h7" strokeWidth="3" />
            </svg>
            <Spacer $w={27} />
            <Bar /><ViewTab $w={220} $on>Perspective</ViewTab>
            <Bar /><ViewTab $w={122}>Top</ViewTab>
            <Bar /><ViewTab $w={142}>Front</ViewTab>
            <Bar /><ViewTab $w={142}>Right</ViewTab>
            <Bar /><ViewTab $w={182}>图纸配置</ViewTab>
          </ViewTabs>
          <Canvas>
            <Scene />
            <ViewLabel>Perspective</ViewLabel>
          </Canvas>
        </Center>
        <Right>
          <PanelHead $h={117}>
            <HeadTitle>
              <span />
              <HeadText>属性: Viewport</HeadText>
              <GearButton><Gear /><Down /></GearButton>
            </HeadTitle>
            <Spacer $h={6} />
            <IconRow $pl={209} $gap={15}>
              <svg width="46" height="42" viewBox="0 0 46 42" fill="none" stroke="#4286f5" strokeWidth="2">
                <path d="M1.5 10H13L16 4H29L32 10H44.5V35H1.5Z" /><circle cx="23" cy="23" r="12.5" /><circle cx="23" cy="23" r="9" strokeWidth="1.5" />
              </svg>
              <svg width="45" height="42" viewBox="0 0 45 42" fill="none" stroke="#777">
                <rect x="1.5" y="2" width="42" height="38" strokeWidth="2.5" fill="#e6e6e6" /><rect x="5" y="6" width="35" height="30" stroke="#aaa" /><rect x="9" y="10" width="27" height="22" stroke="#aaa" fill="#ececec" />
              </svg>
              <svg width="45" height="44" viewBox="0 0 45 44" stroke="#777" strokeWidth="2" fill="#ececec">
                <circle cx="35" cy="9" r="7.5" stroke="#999" /><circle cx="26" cy="19" r="8.5" stroke="#999" /><circle cx="13" cy="31" r="11.5" />
              </svg>
            </IconRow>
          </PanelHead>
          <PropBody>
            <Spacer $h={13} />
            <PropRow $h={50}><RowLabel $w={69}>标题:</RowLabel><Field $w={432}>Perspective</Field></PropRow>
            <PropRow $h={46}><RowLabel $w={69}>大小:</RowLabel>2662 x 1896</PropRow>
            <Spacer $h={1} />
            <Option $h={40} $pl={56}><Check s="已锁定" /></Option>
            <Spacer $h={18} />
            <Rule />
            <Spacer $h={15} />
            <PropRow $h={32} $pl={16}>投影</PropRow>
            <Spacer $h={1} />
            <Option $h={30} $pl={58}><RadioDot />Parallel</Option>
            <Option $h={30} $pl={58}><RadioDot $on />Perspective</Option>
            <Option $h={30} $pl={58}><RadioDot />两点透视</Option>
            <Spacer $h={44} />
            <Rule />
            <Spacer $h={14} />
            <PropRow $h={32} $pl={16}>底色图案</PropRow>
            <PropRow $h={56} $pl={67}><RowLabel $w={148}>选取...</RowLabel><Updown /></PropRow>
            <Option $h={32} $pl={56} $dim><Check s="显示底色图案" dim /></Option>
            <Spacer $h={12} />
            <Option $h={32} $pl={56} $dim><Check s="以灰度显示底色图案" dim /></Option>
            <Spacer $h={34} />
            <Rule />
            <Spacer $h={15} />
            <PropRow $h={32} $pl={16}>摄像机</PropRow>
            <Spacer $h={6} />
            {camera.map(([l, v]) => (
              <PropRow key={l} $h={54} $pl={0}>
                <RowLabel $w={152} $right>{l}</RowLabel>
                <Spacer $w={18} />
                <Field $w={118}>{v}</Field>
              </PropRow>
            ))}
          </PropBody>
          <PanelHead $h={119}>
            <HeadTitle>
              <span />
              <HeadText>面板: 图层</HeadText>
              <GearButton><Gear /><Down /></GearButton>
            </HeadTitle>
            <Spacer $h={8} />
            <IconRow $pl={89} $gap={14}>
              <svg width="46" height="44" viewBox="0 0 46 44" fill="none" stroke="#3079f3" strokeWidth="2">
                <path d="M23 3 44 15 23 27 2 15ZM7 18 2 21 23 35 44 21 39 18" />
              </svg>
              <svg width="46" height="44" viewBox="0 0 46 44" fill="none" stroke="#777" strokeWidth="2">
                <path d="M27 27 22 29 2 17 22 5 43 17M7 20 2 24 22 35 26 33" /><path d="M27 19H39L44 24V41H27ZM39 19V24H44" />
              </svg>
              <svg width="46" height="44" viewBox="0 0 46 44" fill="none" stroke="#777" strokeWidth="2.2">
                <path d="M11 4H27L35 12V37H11ZM27 4V12H35" />
              </svg>
              <svg width="46" height="44" viewBox="0 0 46 44" fill="none" stroke="#777" strokeWidth="2">
                <path d="M5 13 20 4 40 10V30L26 40 5 33ZM5 13 26 19 40 10M26 19V40" />
              </svg>
              <svg width="46" height="44" viewBox="0 0 46 44" fill="none" stroke="#777" strokeWidth="2">
                <path d="M43 11V7Q43 4 39 4H12Q8 4 8 9V33M43 11H36V5M36 10V33Q36 40 31 40H6Q2 40 2 33H28Q28 40 31 40" />
              </svg>
              <svg width="46" height="44" viewBox="0 0 46 44" fill="none" stroke="#777" strokeWidth="2">
                <rect x="2" y="4" width="41" height="31" rx="3" /><rect x="6" y="8" width="33" height="23" /><path d="M18 35 16 38H29L27 35M11 40H34" />
              </svg>
              <svg width="46" height="44" viewBox="0 0 46 44" fill="none" stroke="#777" strokeWidth="2">
                <circle cx="22" cy="22" r="19.5" /><path d="M15 16Q15 9 22.5 9T30 16Q30 20 26 22 22.5 24 22.5 28" strokeWidth="3" /><path d="M22.5 32V36" strokeWidth="3.5" />
              </svg>
            </IconRow>
          </PanelHead>
          <LayerTable>
            <TableHead>
              <HeadCell $pl={58}>…</HeadCell>
              <HeadCell /><HeadCell /><HeadCell /><HeadCell /><HeadCell />
              <HeadCell $pl={11}>线型</HeadCell>
              <HeadCell />
              <HeadCell $pl={12} $last>…</HeadCell>
            </TableHead>
            {layers.map(([name, c], i) => (
              <LayerRow key={i}>
                <NameCell>{name}</NameCell>
                <MidCell><RadioDot $on={i === 0} /></MidCell>
                <MidCell><Bulb dim={i === 0} /></MidCell>
                <MidCell><OpenLock dim={i === 0} /></MidCell>
                <MidCell><Swatch $c={c} /></MidCell>
                <MidCell $pr={12}>
                  <svg width="30" height="30" viewBox="0 0 30 30"><circle cx="15" cy="15" r="13.2" fill="#fafafa" stroke="#000" strokeWidth="2" /></svg>
                </MidCell>
                <LineCell>Conti...<Updown /></LineCell>
                <MidCell>
                  <svg width="30" height="30" viewBox="0 0 30 30">
                    <path d="M15 0 30 15 15 30 0 15Z" fill={c} />
                    {i === 5 && <path d="M16 1 29.5 15 16 29.5" fill="none" stroke="#ddd" />}
                  </svg>
                </MidCell>
                <PrintCell><Clip>D</Clip><Updown /></PrintCell>
              </LayerRow>
            ))}
          </LayerTable>
          <TableFoot>
            <Segment>
              <svg width="18" height="18" viewBox="0 0 18 18"><path d="M9 0V18M0 9H18" stroke="#666" strokeWidth="2" /></svg>
              <SegmentBar />
              <svg width="18" height="18" viewBox="0 0 18 18"><path d="M0 9H18" stroke="#b5b5b5" strokeWidth="2" /></svg>
            </Segment>
            <GearButton $solid><Gear /><Down /></GearButton>
          </TableFoot>
        </Right>
      </Main>
      <StatusBar>
        <svg width="26" height="20" viewBox="0 0 26 20">
          <path d="M0 3h4M0 10h4M0 17h4M7 3h19M7 10h19M7 17h19" stroke="#666" strokeWidth="2" />
        </svg>
        <Spacer $w={7} />
        <StatusText $w={2589}>Command: Cone</StatusText>
        <StatusText $w={79}>Feet</StatusText>
        <PlaneSelect>工作平面<Updown c="#8a8a8a" /></PlaneSelect>
        <Spacer $w={29} />
        <StatusText $w={164}>X: -48'-10"</StatusText>
        <StatusText $w={170}>Y: 227'10-1/2"</StatusText>
        <StatusText>Z: 0"</StatusText>
      </StatusBar>
      <Floating>
        <FloatHead><FloatDot /></FloatHead>
        <FloatBody>
          <svg width="42" height="42" viewBox="0 0 42 42">
            <rect x="2" y="2" width="34" height="17" fill="#ccc" stroke="#000" strokeWidth="2.2" />
            <path d="M19 2V19" stroke="#000" strokeWidth="2" />
            <rect x="10" y="10" width="30" height="30" fill="#fff" stroke="#000" strokeWidth="2.4" />
            <path d="M13 15h18M13 19h18M13 23h18M13 27h20M13 31h20M13 35h22" stroke="#777" strokeWidth="2" strokeDasharray="7 2 4 2" />
          </svg>
        </FloatBody>
      </Floating>
    </Window>
  );
}
